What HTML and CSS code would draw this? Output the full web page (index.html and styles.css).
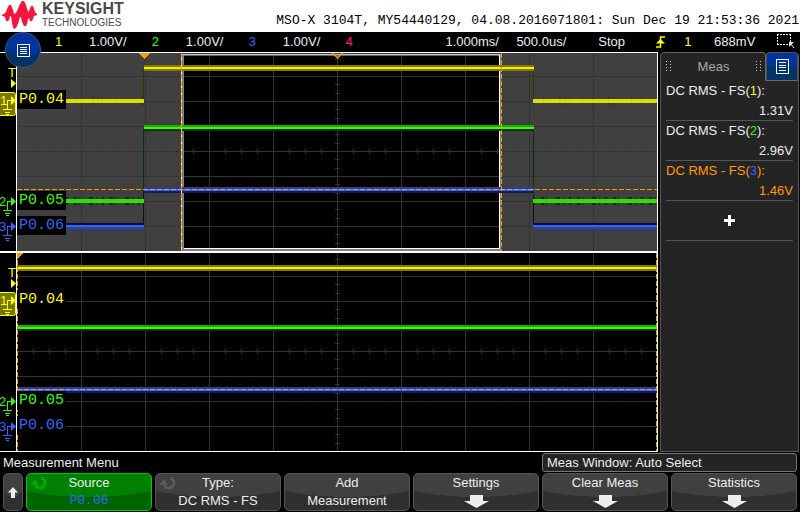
FILE: index.html
```html
<!DOCTYPE html>
<html lang="en">
<head>
    <meta charset="UTF-8">
    <meta name="viewport" content="width=device-width, initial-scale=1.0">
    <title>Keysight MSO-X 3104T</title>
    <link rel="stylesheet" href="styles.css">
</head>
<body>
    <header class="header">
        <div class="brand">
            <svg class="brand-mark" width="38" height="30" viewBox="0 0 38 30">
                <path fill="#f5143c" d="M1 15 L4 14 L6 12 L7 9 L9 5 L11 5 L13 10 L14 14 L16 13 L17 11 L20 4 L22 1 L24 1 L26 5 L28 12 L29 11 L31 6 L33 6 L34 9 L35 12 L37 14 L37 15 L34 16 L33 19 L32 21 L30 21 L29 18 L28 19 L27 24 L26 26 L24 26 L22 22 L21 17 L20 17 L18 24 L16 28 L14 29 L13 27 L12 23 L11 16 L10 16 L9 20 L8 21 L6 21 L5 17 L3 16 Z"/>
            </svg>
            <div>
                <div class="brand-name">KEYSIGHT</div>
                <div class="brand-sub">TECHNOLOGIES</div>
            </div>
        </div>
        <div class="device">MSO-X 3104T, MY54440129, 04.08.2016071801: Sun Dec 19 21:53:36 2021</div>
    </header>

    <div class="status">
        <button class="menu-btn" aria-label="Main menu">
            <svg width="13" height="13" viewBox="0 0 13 13"><use href="#list-icon"/></svg>
        </button>
        <div class="channel"><span class="ch1">1</span>1.00V/</div>
        <div class="channel"><span class="ch2">2</span>1.00V/</div>
        <div class="channel"><span class="ch3">3</span>1.00V/</div>
        <div class="channel"><span class="ch4">4</span></div>
        <div>1.000ms/</div>
        <div>500.0us/</div>
        <div>Stop</div>
        <svg class="edge" width="10" height="12" viewBox="0 0 10 12">
            <path d="M0 11H4.500V1H9" fill="none" stroke="#ffff00" stroke-width="1.500"/>
            <path d="M0 7.500L4.500 3L9 7.500Z" fill="#ffff00"/>
        </svg>
        <div class="ch1">1</div>
        <div>688mV</div>
        <svg class="select-icon" width="19" height="16" viewBox="0 0 19 16">
            <path d="M1 1.500H15M1 11.500H12M1.500 1V12M14.500 1V9" fill="none" stroke="#eee" stroke-dasharray="2 1"/>
            <path d="M13 9H18L13 14Z" fill="#eee"/>
            <path d="M14 10L18 15" stroke="#eee"/>
        </svg>
    </div>

    <main class="main">
        <div class="scope">
            <div class="pane">
                <svg class="gutter" width="16" height="198" viewBox="0 0 16 198">
                    <defs>
                        <g id="list-icon" fill="none" stroke="#fff" shape-rendering="crispEdges">
                            <rect x="0.5" y="0.5" width="12" height="12"/>
                            <path d="M3 3.500H10M3 5.500H10M3 7.500H10M3 9.500H10"/>
                        </g>
                        <g id="ground">
                            <path d="M7.500 9V0.500H11M3 9.500H12M5 12.500H10M6 14.500H9" fill="none" stroke="currentColor" shape-rendering="crispEdges"/>
                            <path d="M11 -4L16 0.500L11 5Z" fill="currentColor"/>
                        </g>
                        <g id="markers">
                            <text x="8" y="24" class="marker-text" fill="#ffff00">T</text>
                            <path d="M11 26L16 30.500L11 35Z" fill="#ffff00"/>
                            <rect x="-3" y="39.500" width="18.500" height="23" rx="2" fill="#777700" stroke="#ffff00"/>
                            <g class="ch1">
                                <text x="0" y="52" class="marker-text">1</text>
                                <use href="#ground" y="47"/>
                            </g>
                            <g class="ch2">
                                <text x="-1" y="153" class="marker-text">2</text>
                                <use href="#ground" y="148"/>
                            </g>
                            <g class="ch3">
                                <text x="-1" y="178" class="marker-text">3</text>
                                <use href="#ground" y="173"/>
                            </g>
                        </g>
                    </defs>
                    <use href="#markers"/>
                </svg>
                <div class="plot">
                    <svg class="trace" viewBox="0 0 640 198" preserveAspectRatio="none" shape-rendering="crispEdges">
                        <defs>
                            <g id="grid" fill="none" stroke="#333">
                                <path d="M64.500 0V198M128.500 0V198M192.500 0V198M256.500 0V198M320.500 0V198M384.500 0V198M448.500 0V198M512.500 0V198M576.500 0V198"/>
                                <path d="M0 23.500H640M0 48.500H640M0 73.500H640M0 98.500H640M0 123.500H640M0 148.500H640M0 173.500H640"/>
                                <path stroke-width="5" stroke-dasharray="1 15" d="M16 98.500H640"/>
                                <path stroke-width="5" stroke-dasharray="1 8 1 15" d="M320.500 6V198"/>
                            </g>
                        </defs>
                        <!-- dimmed area outside the zoom window -->
                        <rect width="640" height="198" fill="#404040"/>
                        <rect x="165" y="1" width="319" height="196" fill="#000"/>
                        <use href="#grid"/>

                        <!-- zoom window frame -->
                        <path d="M165 1.500H485" stroke="#c0c0c0"/>
                        <path d="M166 2.500H484" stroke="#666"/>
                        <path d="M166 2V197M165 197H485" fill="none" stroke="#808080" stroke-width="2"/>
                        <path d="M167 195.500H483" stroke="#fff"/>
                        <path d="M482.500 2V196" stroke="#fff"/>
                        <path d="M483.500 1V198" stroke="#808080"/>

                        <!-- edges -->
                        <path d="M126.500 17V48M516.500 17V48" stroke="#333300"/>
                        <path d="M126.500 76V148M516.500 76V148" stroke="#0b300b"/>
                        <path d="M126.500 138V173M516.500 150V173" stroke="#0a1024"/>

                        <!-- channel 1 -->
                        <path d="M127 15H517" stroke="#807800" stroke-width="6"/>
                        <path d="M127 15H517" stroke="#f8f000" stroke-width="2"/>
                        <path d="M49 48H127M516 48H640" stroke="#333300" stroke-width="8" stroke-dasharray="1 9 1 15 2 4 1 3 1 12"/>
                        <path d="M49 48H127M516 48H640" stroke="#dddd00" stroke-width="4"/>

                        <!-- channel 2 -->
                        <path d="M127 75H517" stroke="#0a3300" stroke-width="6"/>
                        <path d="M127 73H517" stroke="#22a800" stroke-width="2"/>
                        <path d="M127 75H517" stroke="#33ff00" stroke-width="2"/>
                        <path d="M49 148H127M516 148H640" stroke="#0a2a00" stroke-width="8" stroke-dasharray="2 6 3 2 1 9 4 3 1 5"/>
                        <path d="M49 148H127M516 148H640" stroke="#2ee000" stroke-width="4"/>

                        <!-- channel 3 -->
                        <path d="M127 137H517" stroke="#0c1c55" stroke-width="6"/>
                        <path d="M127 135H517" stroke="#1c40a8" stroke-width="2"/>
                        <path d="M127 137H517" stroke="#3366ff" stroke-width="2"/>
                        <path d="M49 171H127M516 171H640" stroke="#0a1024" stroke-width="2"/>
                        <path d="M49 173H127M516 173H640" stroke="#3366ff" stroke-width="2"/>
                        <path d="M49 175H127M516 175H640" stroke="#1f44b4" stroke-width="2"/>

                        <!-- cursors -->
                        <path d="M0 136.500H640" stroke="#ff9900" stroke-dasharray="5 2"/>
                        <path d="M164.500 0V198" stroke="#fff"/>
                        <path d="M164.500 0V198M484.500 0V198" stroke="#ff9900" stroke-dasharray="5 2"/>

                        <path d="M122 0H133L127.500 6Z" fill="#ff9900"/>
                        <path d="M315.500 0L320.500 5L325.500 0" fill="none" stroke="#ff9900" stroke-width="1.500" shape-rendering="auto"/>
                    </svg>
                    <span class="label label-1 ch1">P0.04</span>
                    <span class="label label-2 ch2">P0.05</span>
                    <span class="label label-3 ch3">P0.06</span>
                </div>
            </div>
            <div class="pane">
                <svg class="gutter" width="16" height="198" viewBox="0 0 16 198"><use href="#markers"/></svg>
                <div class="plot">
                    <svg class="trace" viewBox="0 0 640 198" preserveAspectRatio="none" shape-rendering="crispEdges">
                        <use href="#grid"/>
                        <path d="M0 15H640" stroke="#807800" stroke-width="6"/>
                        <path d="M0 15H640" stroke="#f8f000" stroke-width="2"/>
                        <path d="M0 75H640" stroke="#0a3300" stroke-width="6"/>
                        <path d="M0 73H640" stroke="#22a800" stroke-width="2"/>
                        <path d="M0 75H640" stroke="#33ff00" stroke-width="2"/>
                        <path d="M0 137H640" stroke="#0c1c66" stroke-width="6"/>
                        <path d="M0 135H640" stroke="#1c40a8" stroke-width="2"/>
                        <path d="M0 137H640" stroke="#3366ff" stroke-width="2"/>
                        <path d="M0 136.500H640" stroke="#ff9900" stroke-dasharray="5 2"/>
                        <path d="M0.500 0V198M639.500 0V198" stroke="#ff9900" stroke-dasharray="5 2"/>
                        <path d="M0 0H6L0 6Z" fill="#ff9900"/>
                    </svg>
                    <span class="label label-1 ch1">P0.04</span>
                    <span class="label label-2 ch2">P0.05</span>
                    <span class="label label-3 ch3">P0.06</span>
                </div>
            </div>
        </div>

        <aside class="panel">
            <div class="tabs">
                <div class="tab">
                    <span class="grip"></span>
                    <span>Meas</span>
                    <span class="grip"></span>
                </div>
                <button class="tab-btn" aria-label="Panel menu">
                    <svg width="13" height="15" viewBox="0 0 13 15" fill="none" stroke="#fff" shape-rendering="crispEdges">
                        <rect x="0.5" y="0.5" width="12" height="14"/>
                        <path d="M3 3.500H10M3 6.500H10M3 8.500H10M3 11.500H10"/>
                    </svg>
                </button>
            </div>
            <div class="meas">
                <div>DC RMS - FS(<span class="ch1">1</span>):</div>
                <div class="value">1.31V</div>
            </div>
            <div class="meas">
                <div>DC RMS - FS(<span class="ch2">2</span>):</div>
                <div class="value">2.96V</div>
            </div>
            <div class="meas selected">
                <div>DC RMS - FS(<span class="ch3">3</span>):</div>
                <div class="value">1.46V</div>
            </div>
            <button class="meas add" aria-label="Add measurement">
                <svg width="11" height="11" viewBox="0 0 11 11"><path d="M4 0H7V4H11V7H7V11H4V7H0V4H4Z" fill="#fff"/></svg>
            </button>
        </aside>
    </main>

    <footer class="footer">
        <div class="info">
            <div class="menu-title">Measurement Menu</div>
            <div class="message">Meas Window: Auto Select</div>
        </div>
        <div class="softkeys">
            <button class="key back" aria-label="Back">
                <svg width="10" height="11" viewBox="0 0 10 11"><path d="M5 0L10 5.500H7V11H3V5.500H0Z" fill="#eee"/></svg>
            </button>
            <button class="key active">
                <svg class="knob" width="18" height="16" viewBox="0 0 18 16">
                    <path d="M11 2A5 5 0 1 1 5 7" fill="none" stroke="currentColor" stroke-width="3"/>
                    <path d="M0 9L5 3L9 9Z" fill="currentColor"/>
                </svg>
                <span>Source</span>
                <span class="source">P0.06</span>
            </button>
            <button class="key">
                <svg class="knob" width="18" height="16" viewBox="0 0 18 16">
                    <path d="M11 2A5 5 0 1 1 5 7" fill="none" stroke="currentColor" stroke-width="3"/>
                    <path d="M0 9L5 3L9 9Z" fill="currentColor"/>
                </svg>
                <span>Type:</span>
                <span>DC RMS - FS</span>
            </button>
            <button class="key">
                <span>Add</span>
                <span>Measurement</span>
            </button>
            <button class="key">
                <span>Settings</span>
                <svg class="down" width="25" height="13" viewBox="0 0 25 13"><path d="M6 0H19V6H25L12.500 13L0 6H6Z" fill="#eee"/></svg>
            </button>
            <button class="key">
                <span>Clear Meas</span>
                <svg class="down" width="25" height="13" viewBox="0 0 25 13"><path d="M6 0H19V6H25L12.500 13L0 6H6Z" fill="#eee"/></svg>
            </button>
            <button class="key">
                <span>Statistics</span>
                <svg class="down" width="25" height="13" viewBox="0 0 25 13"><path d="M6 0H19V6H25L12.500 13L0 6H6Z" fill="#eee"/></svg>
            </button>
        </div>
    </footer>
</body>
</html>
```
FILE: styles.css
```css
* {
    box-sizing: border-box;
}
body {
    margin: 0;
    background-color: #000;
    color: #eee;
    font-family: "Liberation Sans", Arial, sans-serif;
    font-size: 13px;
    line-height: 20px;
}
button {
    font: inherit;
    color: inherit;
    padding: 0;
    border: none;
    cursor: pointer;
}
svg {
    display: block;
}
.ch1 {
    color: #ffff00;
    fill: #ffff00;
}
.ch2 {
    color: #33ff00;
    fill: #33ff00;
}
.ch3 {
    color: #3366ff;
    fill: #3366ff;
}
.ch4 {
    color: #ff1493;
}

/* header */
.header {
    display: flex;
    justify-content: space-between;
    align-items: flex-start;
    height: 32px;
    background-color: #fff;
    color: #000;
}
.brand {
    display: flex;
    gap: 4px;
    color: #4a4a4a;
}
.brand-name {
    font-size: 16px;
    font-weight: bold;
    line-height: 18px;
}
.brand-sub {
    font-size: 10px;
    line-height: 10px;
}
.device {
    padding: 11px 1px 0 0;
    font-family: "Liberation Mono", "Courier New", monospace;
    white-space: nowrap;
}

/* status bar */
.status {
    position: relative;
    display: grid;
    grid-template-columns: 97fr 97fr 97fr 100fr 71fr 82fr 58fr 28fr 30fr 62fr 24fr;
    padding-left: 55px;
    height: 20px;
    white-space: nowrap;
}
.channel {
    display: flex;
}
.channel span {
    width: 34px;
}
.edge {
    margin-top: 4px;
}
.select-icon {
    margin-top: 1px;
}
.menu-btn {
    position: absolute;
    left: 5px;
    top: 0;
    z-index: 2;
    display: flex;
    align-items: center;
    justify-content: center;
    width: 36px;
    height: 36px;
    border: 1px solid #456;
    border-radius: 50%;
    background: radial-gradient(90% 22px at 60% 0, #0033a0 98%, #003366 100%);
}

/* scope */
.main {
    display: flex;
    gap: 2px;
    padding-right: 1px;
}
.scope {
    flex: 1;
    border: 1px solid #fff;
    border-left: none;
}
.pane {
    display: flex;
}
.pane + .pane {
    border-top: 2px solid #fff;
}
.gutter {
    flex: none;
}
.marker-text {
    font-size: 13px;
}
.plot {
    position: relative;
    flex: 1;
    border-left: 1px solid #fff;
}
.trace {
    width: 100%;
    height: 198px;
}
.label {
    position: absolute;
    left: 0;
    width: 49px;
    padding-left: 2px;
    background-color: #000;
    font-family: "Liberation Mono", "Courier New", monospace;
    font-size: 15px;
    line-height: 19px;
}
.label-1 {
    top: 37px;
}
.label-2 {
    top: 138px;
}
.label-3 {
    top: 163px;
}

/* measurement panel */
.panel {
    width: 139px;
    border: 1px solid #555;
    border-top: none;
    border-radius: 4px 4px 0 0;
    background-color: #242424;
}
.tabs {
    display: flex;
    height: 29px;
    background-color: #000;
}
.tab {
    flex: 1;
    display: flex;
    justify-content: space-between;
    padding: 4px 4px 0 5px;
    border-top: 1px solid #666;
    border-right: 1px solid #666;
    border-radius: 4px 4px 0 0;
    background-color: #242424;
    color: #aaa;
}
.grip {
    width: 5px;
    height: 10px;
    margin-top: 4px;
    background: conic-gradient(at 1px 1px, transparent 75%, #ccc 0) 0 0 / 4px 3px;
}
.tab-btn {
    display: flex;
    align-items: center;
    justify-content: center;
    width: 32px;
    border: 1px solid #555;
    border-bottom-color: #666;
    border-radius: 4px 4px 0 0;
    background: linear-gradient(#0033a0 50%, #003366 50%);
}
.meas {
    height: 40px;
    margin: 0 5px;
    border-bottom: 1px solid #555;
    line-height: 20px;
}
.value {
    text-align: right;
}
.selected {
    color: #ff9900;
}
.add {
    display: flex;
    align-items: center;
    justify-content: center;
    width: 127px;
    background: none;
}

/* footer */
.footer {
    padding: 1px 3px 0;
}
.info {
    display: flex;
    justify-content: space-between;
}
.message {
    width: 255px;
    height: 19px;
    padding-left: 4px;
    border: 1px solid #777;
    border-radius: 3px;
    background-color: #242424;
    line-height: 17px;
}
.softkeys {
    display: grid;
    grid-template-columns: 20px repeat(6, 1fr);
    gap: 3px;
}
.key {
    position: relative;
    display: flex;
    flex-direction: column;
    align-items: center;
    height: 38px;
    border: 1px solid #555;
    border-radius: 5px;
    background: radial-gradient(74% 23px at 50% 0, #404040 99%, #303030 100%);
    line-height: 18px;
}
.back {
    justify-content: center;
}
.active {
    border-color: #00cc00;
    background: radial-gradient(74% 23px at 50% 0, #008000 99%, #006400 100%);
}
.active .knob {
    color: #00aa00;
}
.knob {
    position: absolute;
    left: 3px;
    top: 2px;
    color: #5a5a5a;
}
.source {
    color: #3366ff;
    font-family: "Liberation Mono", "Courier New", monospace;
}
.down {
    margin-top: 3px;
}
```
